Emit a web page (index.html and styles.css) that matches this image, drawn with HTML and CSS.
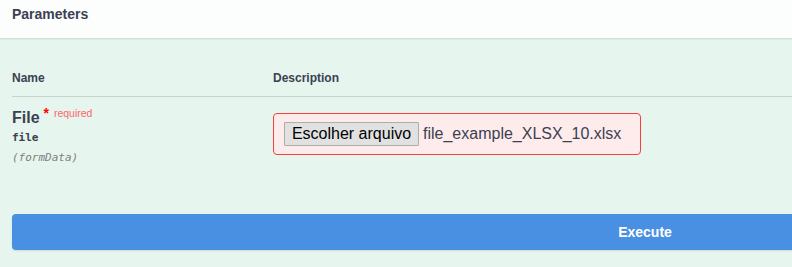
FILE: index.html
```html
<!DOCTYPE html>
<html>
<head>
<meta charset="utf-8">
<link rel="stylesheet" href="styles.css">
</head>
<body>
<div class="block">
  <div class="section-header">
    <h4 class="title">Parameters</h4>
  </div>
  <div class="params">
    <div class="row head">
      <div class="col-name">Name</div>
      <div class="col-desc">Description</div>
    </div>
    <div class="row param">
      <div class="col-name">
        <div class="pname">File<span class="star">&nbsp;*</span><span class="req">required</span></div>
        <div class="ptype">file</div>
        <div class="pin">(formData)</div>
      </div>
      <div class="col-desc">
        <div class="file-input">
          <span class="file-btn">Escolher arquivo</span>
          <span class="file-name">file_example_XLSX_10.xlsx</span>
        </div>
      </div>
    </div>
  </div>
  <div class="exec-wrap">
    <button class="execute">Execute</button>
  </div>
</div>
</body>
</html>
```
FILE: styles.css
```css
html, body {
  margin: 0;
  padding: 0;
  overflow: hidden;
  background: #e6f5ee;
  font-family: "Liberation Sans", Arial, sans-serif;
  color: #3b4151;
}
.block {
  width: 1290px;
  height: 267px;
  background: #e6f5ee;
}
.section-header {
  height: 38px;
  box-sizing: border-box;
  padding: 6px 12px 0;
  background: #fcfdfd;
  box-shadow: 0 1px 2px rgba(0,0,0,0.12);
  position: relative;
}
.title {
  margin: 0;
  font-size: 14px;
  line-height: 17px;
  font-weight: bold;
  color: #3b4151;
}
.params {
  padding: 0 12px;
}
.row {
  display: flex;
}
.col-name {
  width: 261px;
  flex: none;
}
.col-desc {
  flex: 1;
}
.row.head {
  padding-top: 30px;
  height: 28px;
  font-size: 12px;
  font-weight: bold;
  line-height: 18px;
  border-bottom: 1px solid #c6d4cd;
  box-sizing: content-box;
}
.row.head > div {
  padding-top: 1px;
}
.row.param {
  padding-top: 8px;
}
.pname {
  font-size: 16px;
  font-weight: bold;
  line-height: 20px;
  margin-top: 3px;
  color: #3b4151;
}
.star {
  color: #f00;
  font-size: 14px;
  position: relative;
  top: -5px;
}
.req {
  color: #f66;
  font-size: 10.5px;
  font-weight: normal;
  position: relative;
  top: -6px;
  padding-left: 5px;
}
.ptype {
  font-family: "DejaVu Sans Mono", "Liberation Mono", monospace;
  font-size: 11px;
  font-weight: 600;
  line-height: 14px;
  margin-top: 2px;
  color: #3b4151;
}
.pin {
  font-family: "DejaVu Sans Mono", "Liberation Mono", monospace;
  font-size: 11px;
  font-style: italic;
  line-height: 14px;
  margin-top: 6px;
  color: #808080;
}
.file-input {
  width: 368px;
  height: 42px;
  box-sizing: border-box;
  margin-top: 8px;
  border: 1px solid #f93e3e;
  border-radius: 4px;
  background: #feebeb;
  display: flex;
  align-items: center;
  padding-left: 10px;
  gap: 4px;
}
.file-btn {
  width: 135px;
  height: 24px;
  box-sizing: border-box;
  padding: 0;
  text-align: center;
  border: 1px solid #adadad;
  background: #e1e1e1;
  border-radius: 1px;
  font-size: 16px;
  line-height: 22px;
  color: #000;
}
.file-name {
  font-size: 16px;
  color: #3b4151;
}
.exec-wrap {
  padding: 49px 12px 0;
}
.execute {
  display: block;
  width: 100%;
  height: 36px;
  border: none;
  border-radius: 4px;
  background: #4990e2;
  color: #fff;
  font-family: "Liberation Sans", Arial, sans-serif;
  font-size: 14px;
  font-weight: bold;
  box-shadow: 0 1px 2px rgba(0,0,0,0.1);
  padding: 0;
}
```
